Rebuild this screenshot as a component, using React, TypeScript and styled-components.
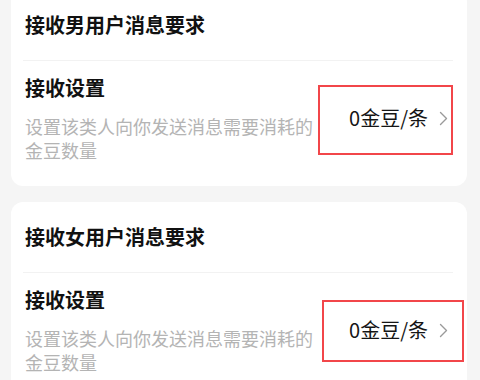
import React from "react";
import styled, { createGlobalStyle } from "styled-components";

const GlobalStyle = createGlobalStyle`
  html, body {
    margin: 0;
    padding: 0;
    background: #f5f5f5;
    font-family: "Noto Sans CJK SC", "Noto Sans", sans-serif;
    overflow: hidden;
  }
`;

interface Box {
  top: number;
  right: number;
  bottom: number;
  left: number;
}

interface Section {
  title: string;
  value: string;
  box: Box;
}

const sections: Section[] = [
  { title: "接收男用户消息要求", value: "0金豆/条", box: { top: -19, right: 0, bottom: -23, left: -31 } },
  { title: "接收女用户消息要求", value: "0金豆/条", box: { top: -16, right: -11, bottom: -18, left: -27 } },
];

function App() {
  return (
    <>
      <GlobalStyle />
      <StyledPage>
        {sections.map((s) => (
          <StyledCard key={s.title}>
            <StyledTitle>{s.title}</StyledTitle>
            <StyledRow>
              <StyledInfo>
                <StyledLabel>接收设置</StyledLabel>
                <StyledDesc>设置该类人向你发送消息需要消耗的金豆数量</StyledDesc>
              </StyledInfo>
              <StyledValue>
                <span>{s.value}</span>
                <svg width="9" height="15" viewBox="0 0 9 15" fill="none">
                  <path d="M1.5 1.5 L7.5 7.5 L1.5 13.5" stroke="#9a9a9a" strokeWidth="1.4" strokeLinecap="round" strokeLinejoin="round" />
                </svg>
                <StyledMark $box={s.box} />
              </StyledValue>
            </StyledRow>
          </StyledCard>
        ))}
      </StyledPage>
    </>
  );
}

const StyledPage = styled.div`
  display: flex;
  flex-direction: column;
  gap: 16px;
  margin: -10px 13px 0 11px;
`;

const StyledCard = styled.div`
  background: #ffffff;
  border-radius: 12px;
  padding: 21px 14px 24px 12px;
`;

const StyledTitle = styled.div`
  font-size: 20px;
  line-height: 28px;
  font-weight: 700;
  color: #111111;
  padding: 0 0 21px 2px;
  border-bottom: 1px solid #f2f2f2;
`;

const StyledRow = styled.div`
  display: flex;
  align-items: center;
  padding-top: 13px;
`;

const StyledInfo = styled.div`
  flex: 1;
  padding-left: 2px;
  min-width: 0;
`;

const StyledLabel = styled.div`
  font-size: 20px;
  line-height: 28px;
  font-weight: 700;
  color: #111111;
`;

const StyledDesc = styled.div`
  margin-top: 12px;
  font-size: 18px;
  line-height: 24px;
  color: #b4b4b4;
`;

const StyledValue = styled.div`
  position: relative;
  display: flex;
  align-items: center;
  gap: 11px;
  margin-left: 30px;
  padding-right: 5px;
  font-size: 20px;
  line-height: 28px;
  color: #151515;
  white-space: nowrap;
`;

const StyledMark = styled.div<{ $box: Box }>`
  position: absolute;
  top: ${(p) => p.$box.top}px;
  right: ${(p) => p.$box.right}px;
  bottom: ${(p) => p.$box.bottom}px;
  left: ${(p) => p.$box.left}px;
  border: 2px solid #f2464a;
  pointer-events: none;
`;

export default App;
